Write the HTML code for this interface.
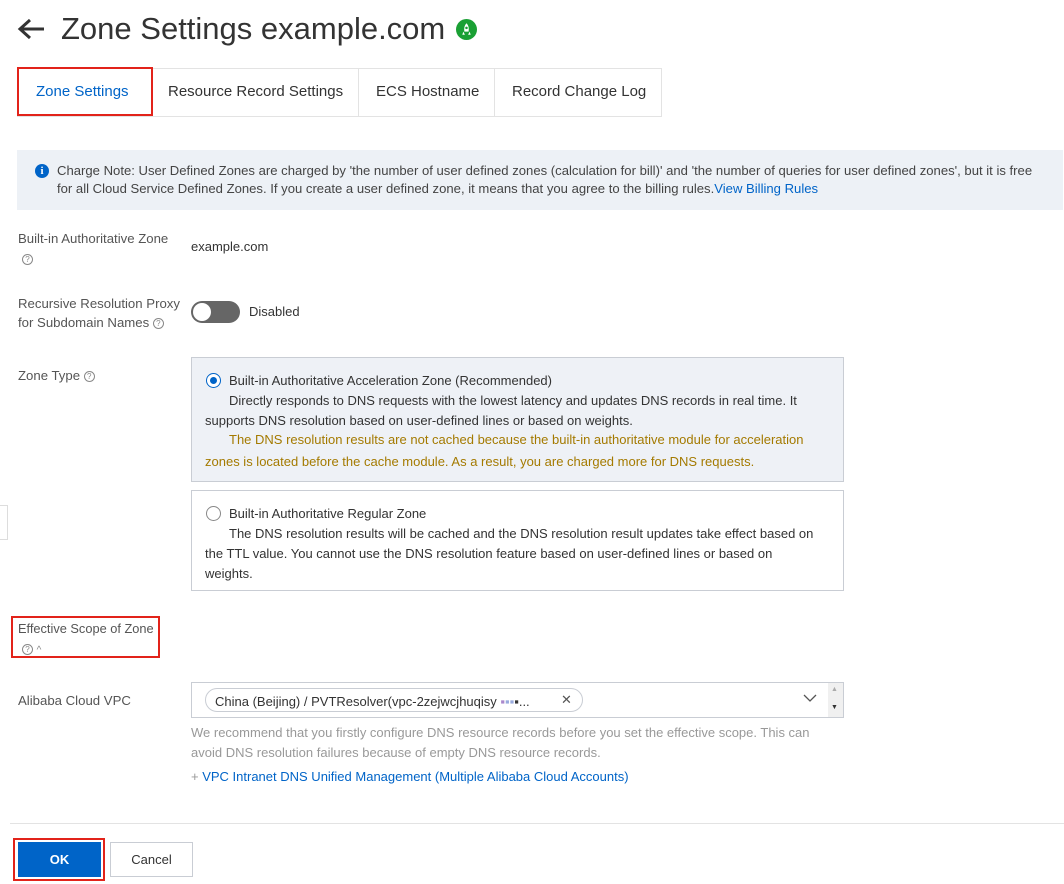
<!DOCTYPE html>
<html><head><meta charset="utf-8"><style>
*{margin:0;padding:0;box-sizing:border-box}
body{width:1064px;height:884px;background:#fff;font-family:"Liberation Sans",sans-serif;color:#333;position:relative;overflow:hidden;font-size:13px}
.a{position:absolute;white-space:nowrap}
.q{display:inline-block;width:11px;height:11px;border:1px solid #888;border-radius:50%;font-size:8px;line-height:9px;text-align:center;color:#888;vertical-align:middle}
.lbl{color:#555;font-size:13.2px}
.t{letter-spacing:0}
</style></head><body>
<svg class="a" style="left:17px;top:17px" width="28" height="24" viewBox="0 0 28 24"><path d="M13 3 L3 12 L13 21 M3 12 H27" stroke="#333" stroke-width="3" fill="none"/></svg>
<div class="a" style="left:61px;top:11px;font-size:31px;color:#333">Zone Settings example.com</div>
<svg class="a" style="left:456px;top:19px" width="21" height="21" viewBox="0 0 20 20"><circle cx="10" cy="10" r="10" fill="#1aa034"/><path d="M10 4 C12 6 12.5 9 12 12 H8 C7.5 9 8 6 10 4Z M7 12 L6 15 H8.5Z M13 12 L14 15 H11.5Z" fill="#fff"/><circle cx="10" cy="8.5" r="1.2" fill="#1aa034"/></svg>

<div class="a" style="left:17px;top:116px;width:645px;border-top:1px solid #e3e3e3"></div>
<div class="a" style="left:152px;top:68px;width:510px;height:49px;border:1px solid #e3e3e3;border-bottom:none"></div>
<div class="a" style="left:358px;top:68px;height:48px;border-left:1px solid #e3e3e3"></div>
<div class="a" style="left:494px;top:68px;height:48px;border-left:1px solid #e3e3e3"></div>
<div class="a" style="left:17px;top:67px;width:136px;height:49px;border:2px solid #e2231a;background:#fff"></div>
<div class="a t" style="left:36px;top:83px;font-size:15px;color:#0064c8">Zone Settings</div>
<div class="a t" style="left:168px;top:83px;font-size:15px">Resource Record Settings</div>
<div class="a t" style="left:376px;top:83px;font-size:15px">ECS Hostname</div>
<div class="a t" style="left:512px;top:83px;font-size:15px">Record Change Log</div>

<div class="a" style="left:17px;top:150px;width:1046px;height:60px;background:#edf1f6"></div>
<div class="a" style="left:35px;top:164px;width:14px;height:14px;border-radius:50%;background:#0064c8;color:#fff;font-size:11px;font-weight:bold;text-align:center;line-height:14px;font-family:'Liberation Serif',serif">i</div>
<div class="a" style="left:57px;top:163px;font-size:13.1px;color:#444">Charge Note: User Defined Zones are charged by 'the number of user defined zones (calculation for bill)' and 'the number of queries for user defined zones', but it is free</div>
<div class="a" style="left:57px;top:181px;font-size:13.1px;color:#444">for all Cloud Service Defined Zones. If you create a user defined zone, it means that you agree to the billing rules.<span style="color:#0064c8">View Billing Rules</span></div>

<div class="a lbl" style="left:18px;top:231px">Built-in Authoritative Zone</div>
<div class="a" style="left:22px;top:251px"><span class="q">?</span></div>
<div class="a" style="left:191px;top:239px;font-size:13px">example.com</div>

<div class="a lbl" style="left:18px;top:296px">Recursive Resolution Proxy</div>
<div class="a lbl" style="left:18px;top:315px">for Subdomain Names <span class="q">?</span></div>
<div class="a" style="left:191px;top:301px;width:49px;height:22px;border-radius:11px;background:#666"></div>
<div class="a" style="left:193px;top:303px;width:18px;height:18px;border-radius:50%;background:#fff"></div>
<div class="a" style="left:249px;top:304px">Disabled</div>

<div class="a lbl" style="left:18px;top:368px">Zone Type <span class="q">?</span></div>
<div class="a" style="left:191px;top:357px;width:653px;height:125px;background:#eef1f6;border:1px solid #c9cdd4"></div>
<div class="a" style="left:206px;top:373px;width:15px;height:15px;border-radius:50%;border:1px solid #0064c8;background:#fff"></div>
<div class="a" style="left:210px;top:377px;width:7px;height:7px;border-radius:50%;background:#0064c8"></div>
<div class="a t" style="left:229px;top:373px">Built-in Authoritative Acceleration Zone (Recommended)</div>
<div class="a t" style="left:229px;top:393px">Directly responds to DNS requests with the lowest latency and updates DNS records in real time. It</div>
<div class="a t" style="left:205px;top:413px">supports DNS resolution based on user-defined lines or based on weights.</div>
<div class="a t" style="left:229px;top:432px;color:#a47a00">The DNS resolution results are not cached because the built-in authoritative module for acceleration</div>
<div class="a t" style="left:205px;top:454px;color:#a47a00">zones is located before the cache module. As a result, you are charged more for DNS requests.</div>

<div class="a" style="left:191px;top:490px;width:653px;height:101px;border:1px solid #c9cdd4"></div>
<div class="a" style="left:206px;top:506px;width:15px;height:15px;border-radius:50%;border:1px solid #888;background:#fff"></div>
<div class="a t" style="left:229px;top:506px">Built-in Authoritative Regular Zone</div>
<div class="a t" style="left:229px;top:526px">The DNS resolution results will be cached and the DNS resolution result updates take effect based on</div>
<div class="a t" style="left:205px;top:546px">the TTL value. You cannot use the DNS resolution feature based on user-defined lines or based on</div>
<div class="a t" style="left:205px;top:566px">weights.</div>
<div class="a" style="left:0;top:505px;width:8px;height:35px;border:1px solid #ddd;border-left:none;background:#fff"></div>

<div class="a" style="left:11px;top:616px;width:149px;height:42px;border:2px solid #e2231a"></div>
<div class="a lbl" style="left:18px;top:621px;font-size:12.8px">Effective Scope of Zone</div>
<div class="a" style="left:22px;top:641px"><span class="q">?</span> <span style="font-size:10px;color:#888">^</span></div>

<div class="a lbl" style="left:18px;top:693px">Alibaba Cloud VPC</div>
<div class="a" style="left:191px;top:682px;width:653px;height:36px;border:1px solid #c9cdd4"></div>
<div class="a" style="left:828px;top:683px;width:15px;height:34px;background:#f0f0f0"></div>
<div class="a" style="left:831px;top:686px;font-size:7px;color:#aaa">▲</div>
<div class="a" style="left:831px;top:704px;font-size:7px;color:#333">▼</div>
<svg class="a" style="left:803px;top:694px" width="14" height="9"><path d="M1 1 L7 7 L13 1" stroke="#555" fill="none" stroke-width="1.3"/></svg>
<div class="a" style="left:205px;top:688px;width:378px;height:24px;border:1px solid #c9cdd4;border-radius:12px"></div>
<div class="a t" style="left:215px;top:694px">China (Beijing) / PVTResolver(vpc-2zejwcjhuqisy <span style="color:#a8c">▪</span><span style="color:#9ad">▪▪</span>▪...</div>
<div class="a" style="left:561px;top:692px;font-size:13px;color:#555">✕</div>
<div class="a t" style="left:191px;top:725px;color:#999">We recommend that you firstly configure DNS resource records before you set the effective scope. This can</div>
<div class="a t" style="left:191px;top:745px;color:#999">avoid DNS resolution failures because of empty DNS resource records.</div>
<div class="a t" style="left:191px;top:769px;color:#0064c8"><span style="color:#999">+</span> VPC Intranet DNS Unified Management (Multiple Alibaba Cloud Accounts)</div>

<div class="a" style="left:10px;top:823px;width:1054px;border-top:1px solid #e3e3e3"></div>
<div class="a" style="left:13px;top:838px;width:92px;height:43px;border:2px solid #e2231a"></div>
<div class="a" style="left:18px;top:842px;width:83px;height:35px;background:#0064c8;color:#fff;font-weight:bold;text-align:center;line-height:35px;font-size:13px">OK</div>
<div class="a" style="left:110px;top:842px;width:83px;height:35px;border:1px solid #c9cdd4;text-align:center;line-height:33px;font-size:13px">Cancel</div>
</body></html>
